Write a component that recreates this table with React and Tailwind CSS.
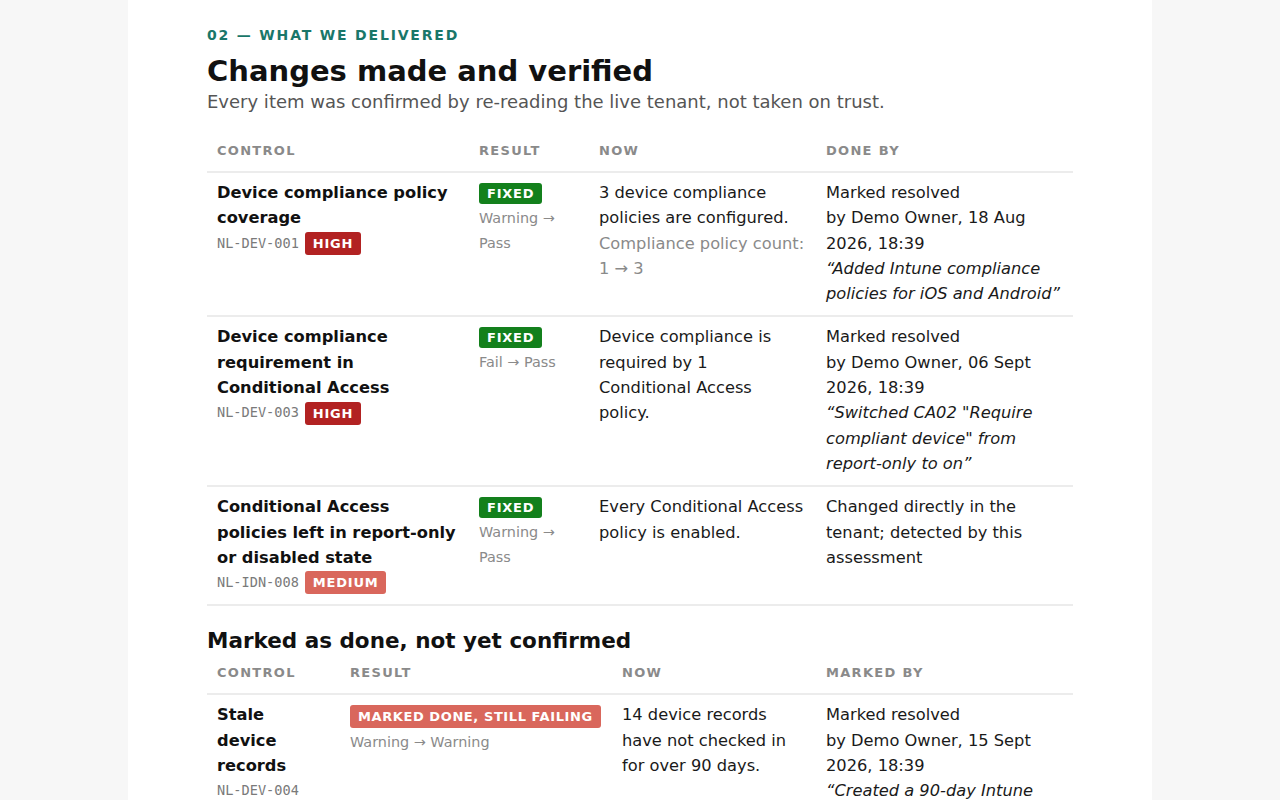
import React from "react";

const SANS = { fontFamily: '"DejaVu Sans", "Noto Sans", sans-serif' };

function Badge({ children, color, className = "" }) {
  return (
    <span
      className={`inline-block whitespace-nowrap rounded-[3px] px-2 text-[13px] font-bold leading-[21px] text-white ${color} ${className}`}
    >
      {children}
    </span>
  );
}

function Code({ children }) {
  return (
    <span
      className="text-[13.6px] text-[#7a7a7a]"
      style={{ fontFamily: '"DejaVu Sans Mono", "Liberation Mono", monospace' }}
    >
      {children}
    </span>
  );
}

function Th({ children }) {
  return (
    <th className="px-[10px] pt-[9px] pb-[9px] text-left align-top text-[13px] font-bold uppercase leading-[22px] tracking-[0.1em] text-[#8a8a8a]">
      {children}
    </th>
  );
}

function Td({ children, pr = "pr-[10px]" }) {
  return <td className={`pl-[10px] ${pr} pt-[7px] pb-[9px] align-top`}>{children}</td>;
}

function Control({ title, code, sev, sevColor }) {
  return (
    <>
      <div className="font-bold text-[#111]">{title}</div>
      <div className="flex flex-wrap items-center gap-x-[6px]">
        <Code>{code}</Code>
        <Badge color={sevColor} className="leading-[23px] tracking-[0.06em]">
          {sev}
        </Badge>
      </div>
    </>
  );
}

function Result({ badge, badgeColor, text, badgeClass = "tracking-[0.06em]" }) {
  return (
    <>
      <div className="pt-[3px] pb-[2px] leading-none">
        <Badge color={badgeColor} className={badgeClass}>
          {badge}
        </Badge>
      </div>
      <div className="text-[14.4px] leading-[25px] text-[#8a8a8a]">{text}</div>
    </>
  );
}

function DoneBy({ who, note }) {
  return (
    <>
      <div>Marked resolved</div>
      <div>{who}</div>
      {note && <div className="italic">{note}</div>}
    </>
  );
}

const GREEN = "bg-[#13801c]";
const RED = "bg-[#b22222]";
const SALMON = "bg-[#d9675c]";

export default function App() {
  return (
    <div className="min-h-screen bg-[#f7f7f7]" style={SANS}>
      <div className="mx-auto min-h-screen w-[1024px] bg-white px-[79px] pt-[25px] pb-10">
        <div className="text-[14px] font-bold leading-[20px] tracking-[0.13em] text-[#19776a]">
          02 — WHAT WE DELIVERED
        </div>
        <h1 className="mt-2 text-[29px] font-bold leading-[36px] text-[#111]">
          Changes made and verified
        </h1>
        <p className="text-[18px] leading-[26px] text-[#555]">
          Every item was confirmed by re-reading the live tenant, not taken on trust.
        </p>

        <table className="mt-4 w-[866px] table-fixed border-collapse text-[16.25px] leading-[25.3px] text-[#1a1a1a]">
          <colgroup>
            <col className="w-[262px]" />
            <col className="w-[120px]" />
            <col className="w-[227px]" />
            <col className="w-[257px]" />
          </colgroup>
          <thead>
            <tr className="border-b-2 border-[#ececec]">
              <Th>Control</Th>
              <Th>Result</Th>
              <Th>Now</Th>
              <Th>Done by</Th>
            </tr>
          </thead>
          <tbody>
            <tr className="border-b-2 border-[#ececec]">
              <Td>
                <Control
                  title="Device compliance policy coverage"
                  code="NL-DEV-001"
                  sev="HIGH"
                  sevColor={RED}
                />
              </Td>
              <Td>
                <Result badge="FIXED" badgeColor={GREEN} text="Warning → Pass" />
              </Td>
              <Td>
                <div>3 device compliance policies are configured.</div>
                <div className="text-[#8a8a8a]">Compliance policy count: 1 → 3</div>
              </Td>
              <Td>
                <DoneBy
                  who="by Demo Owner, 18 Aug 2026, 18:39"
                  note="“Added Intune compliance policies for iOS and Android”"
                />
              </Td>
            </tr>
            <tr className="border-b-2 border-[#ececec]">
              <Td>
                <Control
                  title="Device compliance requirement in Conditional Access"
                  code="NL-DEV-003"
                  sev="HIGH"
                  sevColor={RED}
                />
              </Td>
              <Td>
                <Result badge="FIXED" badgeColor={GREEN} text="Fail → Pass" />
              </Td>
              <Td>
                <div>
                  Device compliance is required by 1<br />
                  Conditional Access policy.
                </div>
              </Td>
              <Td>
                <DoneBy
                  who="by Demo Owner, 06 Sept 2026, 18:39"
                  note={'“Switched CA02 "Require compliant device" from report-only to on”'}
                />
              </Td>
            </tr>
            <tr className="border-b-2 border-[#ececec]">
              <Td>
                <Control
                  title="Conditional Access policies left in report-only or disabled state"
                  code="NL-IDN-008"
                  sev="MEDIUM"
                  sevColor={SALMON}
                />
              </Td>
              <Td>
                <Result badge="FIXED" badgeColor={GREEN} text="Warning → Pass" />
              </Td>
              <Td>
                <div>Every Conditional Access policy is enabled.</div>
              </Td>
              <Td>
                <div>Changed directly in the tenant; detected by this assessment</div>
              </Td>
            </tr>
          </tbody>
        </table>

        <h2 className="mt-[23px] text-[21.5px] font-bold leading-[24px] text-[#111]">
          Marked as done, not yet confirmed
        </h2>

        <table className="w-[866px] table-fixed border-collapse text-[16.25px] leading-[25.3px] text-[#1a1a1a]">
          <colgroup>
            <col className="w-[133px]" />
            <col className="w-[272px]" />
            <col className="w-[204px]" />
            <col className="w-[257px]" />
          </colgroup>
          <thead>
            <tr className="border-b-2 border-[#ececec]">
              <Th>Control</Th>
              <Th>Result</Th>
              <Th>Now</Th>
              <Th>Marked by</Th>
            </tr>
          </thead>
          <tbody>
            <tr className="border-b-2 border-[#ececec]">
              <Td pr="pr-[20px]">
                <Control
                  title="Stale device records"
                  code="NL-DEV-004"
                  sev="MEDIUM"
                  sevColor={SALMON}
                />
              </Td>
              <Td>
                <Result
                  badge="MARKED DONE, STILL FAILING"
                  badgeColor={SALMON}
                  badgeClass="leading-[23px] tracking-[0.045em]"
                  text="Warning → Warning"
                />
              </Td>
              <Td>
                <div>14 device records have not checked in for over 90 days.</div>
              </Td>
              <Td>
                <DoneBy
                  who="by Demo Owner, 15 Sept 2026, 18:39"
                  note="“Created a 90-day Intune device cleanup rule”"
                />
              </Td>
            </tr>
          </tbody>
        </table>
      </div>
    </div>
  );
}
